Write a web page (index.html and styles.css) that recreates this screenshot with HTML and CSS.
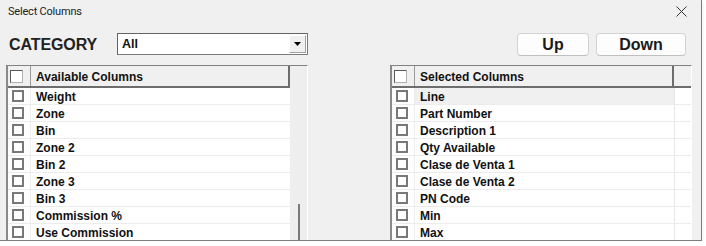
FILE: index.html
```html
<!DOCTYPE html>
<html lang="en">
<head>
<meta charset="utf-8">
<title>Select Columns</title>
<link rel="stylesheet" href="styles.css">
</head>
<body>
<div class="dialog">
  <div class="titlebar">
    <span class="title">Select Columns</span>
    <svg class="close" width="11" height="11" viewBox="0 0 11 11"><path d="M0.5 0.5 L10.5 10.5 M10.5 0.5 L0.5 10.5" stroke="#333" stroke-width="1" fill="none"/></svg>
  </div>
  <div class="toolbar">
    <span class="cat-label">CATEGORY</span>
    <div class="select">
      <span class="select-value">All</span>
      <span class="select-btn"><svg width="7" height="4" viewBox="0 0 7 4"><path d="M0 0 H7 L3.5 4 Z" fill="#000"/></svg></span>
    </div>
    <button class="btn btn-up">Up</button>
    <button class="btn btn-down">Down</button>
  </div>
  <div class="panels">
    <div class="panel">
      <div class="grid two">
        <div class="row head"><div class="cb-cell"><span class="hcb"></span></div><div class="txt">Available Columns</div></div>
        <div class="row"><div class="cb-cell"><span class="cb"></span></div><div class="txt">Weight</div></div>
        <div class="row"><div class="cb-cell"><span class="cb"></span></div><div class="txt">Zone</div></div>
        <div class="row"><div class="cb-cell"><span class="cb"></span></div><div class="txt">Bin</div></div>
        <div class="row"><div class="cb-cell"><span class="cb"></span></div><div class="txt">Zone 2</div></div>
        <div class="row"><div class="cb-cell"><span class="cb"></span></div><div class="txt">Bin 2</div></div>
        <div class="row"><div class="cb-cell"><span class="cb"></span></div><div class="txt">Zone 3</div></div>
        <div class="row"><div class="cb-cell"><span class="cb"></span></div><div class="txt">Bin 3</div></div>
        <div class="row"><div class="cb-cell"><span class="cb"></span></div><div class="txt">Commission %</div></div>
        <div class="row"><div class="cb-cell"><span class="cb"></span></div><div class="txt">Use Commission</div></div>
      </div>
      <div class="vscroll"><div class="thumb"></div></div>
    </div>
    <div class="panel">
      <div class="grid three">
        <div class="row head"><div class="cb-cell"><span class="hcb"></span></div><div class="txt">Selected Columns</div><div class="fill"></div></div>
        <div class="row"><div class="cb-cell"><span class="cb"></span></div><div class="txt sel">Line</div><div class="fill"></div></div>
        <div class="row"><div class="cb-cell"><span class="cb"></span></div><div class="txt">Part Number</div><div class="fill"></div></div>
        <div class="row"><div class="cb-cell"><span class="cb"></span></div><div class="txt">Description 1</div><div class="fill"></div></div>
        <div class="row"><div class="cb-cell"><span class="cb"></span></div><div class="txt">Qty Available</div><div class="fill"></div></div>
        <div class="row"><div class="cb-cell"><span class="cb"></span></div><div class="txt">Clase de Venta 1</div><div class="fill"></div></div>
        <div class="row"><div class="cb-cell"><span class="cb"></span></div><div class="txt">Clase de Venta 2</div><div class="fill"></div></div>
        <div class="row"><div class="cb-cell"><span class="cb"></span></div><div class="txt">PN Code</div><div class="fill"></div></div>
        <div class="row"><div class="cb-cell"><span class="cb"></span></div><div class="txt">Min</div><div class="fill"></div></div>
        <div class="row"><div class="cb-cell"><span class="cb"></span></div><div class="txt">Max</div><div class="fill"></div></div>
      </div>
    </div>
  </div>
</div>
</body>
</html>
```

FILE: styles.css
```css
html, body {
  margin: 0;
  padding: 0;
  background: #ffffff;
}

.dialog {
  width: 702px;
  height: 241px;
  box-sizing: border-box;
  background: #f0f0f0;
  border-right: 1px solid #7d7d7d;
  border-bottom: 1px solid #7d7d7d;
  box-shadow: 0 2px 3px rgba(0, 0, 0, 0.12);
  overflow: hidden;
  display: flex;
  flex-direction: column;
  font-family: "Liberation Sans", Arial, sans-serif;
  color: #111;
}

.titlebar {
  flex: none;
  height: 23px;
  display: flex;
  align-items: center;
  justify-content: space-between;
  padding: 0 14px 0 8px;
}

.title {
  font-family: Roboto, "Liberation Sans", sans-serif;
  font-size: 11px;
  letter-spacing: -0.2px;
  color: #222;
}

.close {
  display: block;
}

.toolbar {
  flex: none;
  display: flex;
  align-items: center;
  height: 23px;
  margin-top: 10px;
  padding-left: 9px;
}

.cat-label {
  flex: 0 0 108px;
  font-weight: bold;
  font-size: 16px;
  letter-spacing: -0.1px;
  color: #222;
  padding-top: 1px;
}

.select {
  flex: none;
  width: 191px;
  height: 22px;
  box-sizing: border-box;
  background: #fff;
  border: 1px solid #7a7a7a;
  border-top-color: #646464;
  border-left-color: #646464;
  padding: 1px;
  display: flex;
  align-items: center;
  justify-content: space-between;
  align-self: flex-start;
}

.select-value {
  padding-left: 3px;
  font-weight: bold;
  font-size: 12.5px;
}

.select-btn {
  width: 17px;
  height: 18px;
  box-sizing: border-box;
  background: #f0f0f0;
  border: 1px solid #a0a0a0;
  border-top-color: #fff;
  border-left-color: #fff;
  display: flex;
  align-items: center;
  justify-content: center;
}

.select-btn svg {
  display: block;
}

.btn {
  flex: none;
  height: 23px;
  box-sizing: border-box;
  background: #fdfdfd;
  border: 1px solid #d3d3d3;
  border-bottom-color: #c0c0c0;
  border-radius: 4px;
  font-family: "Liberation Sans", Arial, sans-serif;
  font-weight: bold;
  font-size: 16px;
  color: #1a1a1a;
  padding: 0;
  line-height: 21px;
}

.btn-up {
  width: 72px;
  margin-left: 209px;
}

.btn-down {
  width: 90px;
  margin-left: 7px;
}

.panels {
  flex: none;
  display: flex;
  gap: 82px;
  margin-top: 9px;
  padding-left: 6px;
}

.panel {
  flex: none;
  width: 302px;
  height: 200px;
  box-sizing: border-box;
  background: #fff;
  border-top: 1px solid #828282;
  border-left: 2px solid #8a8a8a;
  border-right: 1px solid #ffffff;
  display: flex;
}

.grid {
  flex: 1;
  display: flex;
  flex-direction: column;
}

.row {
  display: grid;
  height: 17px;
  box-sizing: border-box;
  border-bottom: 1px solid #ececec;
  font-size: 12px;
  font-weight: bold;
  align-items: center;
}

.two .row {
  grid-template-columns: 23px 1fr;
}

.three .row {
  grid-template-columns: 23px 1fr 17px;
}

.row.head {
  height: 22px;
  background: #f0f0f0;
  border-bottom: 2px solid #6d6d6d;
  align-items: stretch;
}

.cb-cell {
  box-sizing: border-box;
  height: 100%;
  border-right: 1px solid #ececec;
  display: flex;
  align-items: center;
  padding-left: 4px;
}

.head .cb-cell {
  border-right: 1px solid #9a9a9a;
  padding-left: 2px;
}

.txt {
  height: 100%;
  box-sizing: border-box;
  display: flex;
  align-items: center;
  padding-left: 5px;
  padding-top: 1px;
  white-space: nowrap;
}

.head .txt {
  border-right: 2px solid #6d6d6d;
}

.txt.sel {
  background: #f0f0f0;
}

.fill {
  height: 100%;
  box-sizing: border-box;
  border-left: 1px solid #e6e6e6;
}

.head .fill {
  border-left: none;
}

.cb {
  display: block;
  width: 12px;
  height: 12px;
  box-sizing: border-box;
  border: 2px solid #787878;
  background: #fff;
}

.hcb {
  display: block;
  width: 13px;
  height: 13px;
  box-sizing: border-box;
  background: #fff;
  border: 1px solid #b0b0b0;
  border-top-color: #5a5a5a;
  border-left-color: #5a5a5a;
}

.vscroll {
  flex: 0 0 17px;
  background: #eeeeee;
  padding-top: 138px;
  box-sizing: border-box;
}

.thumb {
  width: 2px;
  height: 60px;
  margin-left: 8px;
  background: #7b7b7b;
}
```
